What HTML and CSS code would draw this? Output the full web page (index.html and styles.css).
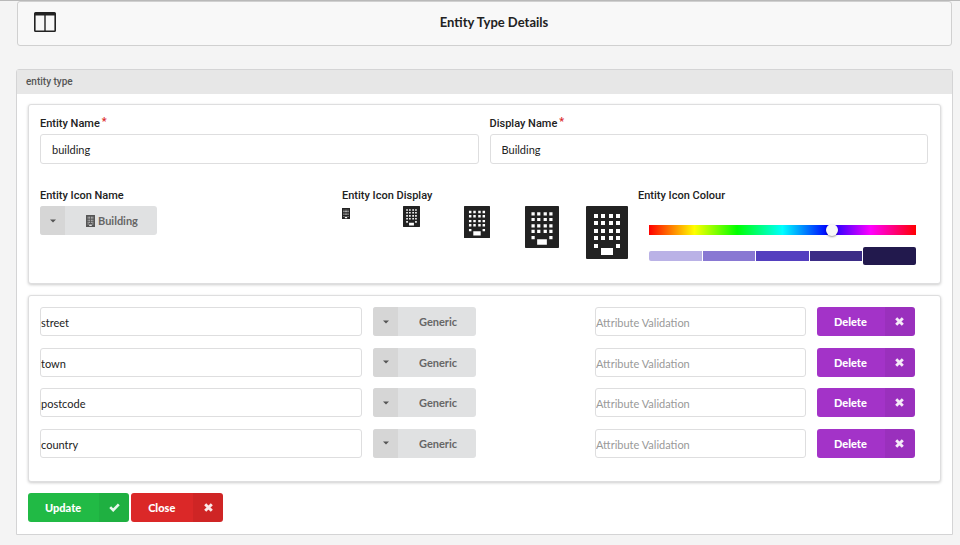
FILE: index.html
```html
<!DOCTYPE html>
<html lang="en">
<head>
<meta charset="utf-8">
<meta name="viewport" content="width=device-width, initial-scale=1">
<title>Entity Type Details</title>
<link rel="stylesheet" href="styles.css">
</head>
<body>
<svg class="sprite" aria-hidden="true">
  <symbol id="columns" viewBox="0 0 22 20">
    <path fill="currentColor" fill-rule="evenodd" d="M1.500 0h19A1.500 1.500 0 0 1 22 1.500v17A1.500 1.500 0 0 1 20.500 20h-19A1.500 1.500 0 0 1 0 18.500v-17A1.500 1.500 0 0 1 1.500 0zM1.600 3.500v15h8.700v-15zM11.700 3.500v15h8.700v-15z"/>
  </symbol>
  <symbol id="building" viewBox="0 0 42 53" preserveAspectRatio="none">
    <path fill="currentColor" fill-rule="evenodd" d="M1 0h40a1 1 0 0 1 1 1v51a1 1 0 0 1-1 1H1a1 1 0 0 1-1-1V1a1 1 0 0 1 1-1z
      M8 8v4h4V8zM15 8v4h4V8zM23 8v4h4V8zM30 8v4h4V8z
      M8 15v4h4v-4zM15 15v4h4v-4zM23 15v4h4v-4zM30 15v4h4v-4z
      M8 23v4h4v-4zM15 23v4h4v-4zM23 23v4h4v-4zM30 23v4h4v-4z
      M8 30v4h4v-4zM15 30v4h4v-4zM23 30v4h4v-4zM30 30v4h4v-4z
      M8 38v4h4v-4zM30 38v4h4v-4zM15 42v7h12v-7z"/>
  </symbol>
  <symbol id="cross" viewBox="0 0 9 9">
    <path fill="none" stroke="currentColor" stroke-width="2.900" d="M1.200 1.200l6.600 6.600M7.800 1.200L1.200 7.800"/>
  </symbol>
  <symbol id="check" viewBox="0 0 11 9">
    <path fill="none" stroke="currentColor" stroke-width="2.600" d="M1.200 4.200l3 3L9.800 1.300"/>
  </symbol>
  <symbol id="caret" viewBox="0 0 6 4">
    <path fill="currentColor" d="M0 .500h6L3 3.500z"/>
  </symbol>
</svg>

<header class="topbar">
  <svg class="topbar-icon" aria-hidden="true"><use href="#columns"/></svg>
  <h1>Entity Type Details</h1>
</header>

<main class="panel">
  <h2 class="panel-title">entity type</h2>
  <form class="panel-body">
    <section class="card details">
      <div class="names">
        <div class="field">
          <label for="entity-name">Entity Name<span class="required">*</span></label>
          <input class="text" id="entity-name" type="text" value="building">
        </div>
        <div class="field">
          <label for="display-name">Display Name<span class="required">*</span></label>
          <input class="text" id="display-name" type="text" value="Building">
        </div>
      </div>
      <div class="icons">
        <div class="field">
          <label for="icon-name">Entity Icon Name</label>
          <div class="dropdown with-icon">
            <select id="icon-name"><option>Building</option></select>
            <span class="dropdown-caret"><svg aria-hidden="true"><use href="#caret"/></svg></span>
            <svg class="dropdown-icon" aria-hidden="true"><use href="#building"/></svg>
          </div>
        </div>
        <div class="field">
          <h3>Entity Icon Display</h3>
          <div class="icon-sizes">
            <svg class="icon-mini" aria-hidden="true"><use href="#building"/></svg>
            <svg class="icon-small" aria-hidden="true"><use href="#building"/></svg>
            <svg class="icon-medium" aria-hidden="true"><use href="#building"/></svg>
            <svg class="icon-large" aria-hidden="true"><use href="#building"/></svg>
            <svg class="icon-huge" aria-hidden="true"><use href="#building"/></svg>
          </div>
        </div>
        <div class="field">
          <label for="hue">Entity Icon Colour</label>
          <div class="colour">
            <input class="hue" id="hue" type="range" min="0" max="360" value="250">
            <div class="swatches">
              <button type="button" class="shade-1" aria-label="Lightest"></button>
              <button type="button" class="shade-2" aria-label="Light"></button>
              <button type="button" class="shade-3" aria-label="Medium"></button>
              <button type="button" class="shade-4" aria-label="Dark"></button>
              <button type="button" class="shade-5 active" aria-label="Darkest"></button>
            </div>
          </div>
        </div>
      </div>
    </section>

    <section class="card attributes">
      <div class="attribute">
        <input class="text flush" type="text" value="street" aria-label="Attribute name">
        <div class="dropdown"><select aria-label="Attribute type"><option>Generic</option></select><span class="dropdown-caret"><svg aria-hidden="true"><use href="#caret"/></svg></span></div>
        <input class="text flush" type="text" placeholder="Attribute Validation" aria-label="Attribute Validation">
        <button type="button" class="button purple">Delete<span class="button-icon"><svg aria-hidden="true"><use href="#cross"/></svg></span></button>
      </div>
      <div class="attribute">
        <input class="text flush" type="text" value="town" aria-label="Attribute name">
        <div class="dropdown"><select aria-label="Attribute type"><option>Generic</option></select><span class="dropdown-caret"><svg aria-hidden="true"><use href="#caret"/></svg></span></div>
        <input class="text flush" type="text" placeholder="Attribute Validation" aria-label="Attribute Validation">
        <button type="button" class="button purple">Delete<span class="button-icon"><svg aria-hidden="true"><use href="#cross"/></svg></span></button>
      </div>
      <div class="attribute">
        <input class="text flush" type="text" value="postcode" aria-label="Attribute name">
        <div class="dropdown"><select aria-label="Attribute type"><option>Generic</option></select><span class="dropdown-caret"><svg aria-hidden="true"><use href="#caret"/></svg></span></div>
        <input class="text flush" type="text" placeholder="Attribute Validation" aria-label="Attribute Validation">
        <button type="button" class="button purple">Delete<span class="button-icon"><svg aria-hidden="true"><use href="#cross"/></svg></span></button>
      </div>
      <div class="attribute">
        <input class="text flush" type="text" value="country" aria-label="Attribute name">
        <div class="dropdown"><select aria-label="Attribute type"><option>Generic</option></select><span class="dropdown-caret"><svg aria-hidden="true"><use href="#caret"/></svg></span></div>
        <input class="text flush" type="text" placeholder="Attribute Validation" aria-label="Attribute Validation">
        <button type="button" class="button purple">Delete<span class="button-icon"><svg aria-hidden="true"><use href="#cross"/></svg></span></button>
      </div>
    </section>

    <div class="actions">
      <button type="button" class="button green">Update<span class="button-icon"><svg class="check" aria-hidden="true"><use href="#check"/></svg></span></button>
      <button type="button" class="button red">Close<span class="button-icon"><svg aria-hidden="true"><use href="#cross"/></svg></span></button>
    </div>
  </form>
</main>
</body>
</html>
```
FILE: styles.css
```css
* { box-sizing: border-box; }

body {
  margin: 0;
  padding: 0 7px 11px 16px;
  border-top: 1px solid #b9b9b9;
  background: #f4f4f4;
  color: #222;
  font-family: Lato, "Liberation Sans", sans-serif;
  font-size: 11px;
}

h1, h2, h3 { margin: 0; }
input, select, button { margin: 0; font-family: inherit; font-size: 11px; }
.sprite { display: none; }

.topbar {
  display: grid;
  grid-template-columns: 1fr auto 1fr;
  align-items: center;
  height: 45px;
  margin: 0 1px 23px;
  padding: 0 16px 3px;
  border: 1px solid #d0d0d0;
  border-radius: 3px;
  background: #f8f8f8;
}
.topbar h1 { padding-left: 19px; font-size: 13px; line-height: 18px; }
.topbar-icon { width: 22px; height: 20px; }

.panel {
  border: 1px solid #d4d4d5;
  border-radius: 3px 3px 0 0;
  background: #fff;
}
.panel-title {
  padding: 0 9px;
  background: #e7e7e7;
  color: #555;
  font-family: Roboto, sans-serif;
  font-size: 10px;
  font-weight: 500;
  line-height: 24px;
}
.panel-body { padding: 10px 11px 12px; }

.card {
  margin-bottom: 11px;
  padding: 11px 12px 11px 11px;
  border: 1px solid #dededf;
  border-radius: 3px;
  background: #fff;
  box-shadow: 0 1px 3px rgba(0, 0, 0, .2);
}
.details { min-height: 180px; }

.names {
  display: grid;
  grid-template-columns: 1fr 1fr;
  gap: 11px;
  margin-bottom: 24px;
}
.icons {
  display: grid;
  grid-template-columns: minmax(0, 291fr) minmax(0, 285fr) minmax(0, 290fr);
  gap: 11px;
}

.field label, .field h3 {
  display: block;
  margin-bottom: 2px;
  font-family: Roboto, sans-serif;
  font-size: 11px;
  font-weight: 500;
  line-height: 16px;
}
.required { margin-left: 2px; color: #db2828; line-height: 0; vertical-align: 2px; }

.text {
  display: block;
  width: 100%;
  min-width: 0;
  height: 30px;
  padding: 1px 11px 0;
  border: 1px solid #dededf;
  border-radius: 3px;
  background: #fff;
  color: #222;
}
.text.flush { height: 29px; padding: 2px 0 0; }
.text::placeholder { color: #999; opacity: 1; }

.dropdown { position: relative; width: 103px; height: 29px; }
.dropdown.with-icon { width: 117px; }
.dropdown select {
  appearance: none;
  width: 100%;
  height: 100%;
  padding: 0 0 0 46px;
  border: 0;
  border-radius: 3px;
  background: #e0e1e2;
  color: #666;
  font-weight: 700;
}
.dropdown.with-icon select { padding-left: 58px; }
.dropdown-caret {
  position: absolute;
  inset: 0 auto 0 0;
  display: grid;
  place-items: center;
  width: 25px;
  border-radius: 3px 0 0 3px;
  background: #d6d6d6;
  color: #555;
  pointer-events: none;
}
.dropdown-caret svg { width: 6px; height: 4px; }
.dropdown-icon {
  position: absolute;
  top: 9px;
  left: 46px;
  width: 9px;
  height: 12px;
  color: #555;
  pointer-events: none;
}

.icon-sizes {
  display: grid;
  grid-template-columns: repeat(5, 61px);
  align-items: start;
}
.icon-mini { width: 8px; height: 11px; margin-top: 2px; }
.icon-small { width: 17px; height: 21px; }
.icon-medium { width: 26px; height: 32px; }
.icon-large { width: 34px; height: 42px; }
.icon-huge { width: 42px; height: 53px; }

.colour { padding: 19px 12px 0 11px; }
.hue {
  appearance: none;
  display: block;
  width: 100%;
  height: 10px;
  background: linear-gradient(to right, #f00, #ff0 17%, #0f0 33%, #0ff 50%, #00f 67%, #f0f 83%, #f00);
}
.hue::-webkit-slider-thumb {
  appearance: none;
  width: 12px;
  height: 12px;
  border-radius: 50%;
  background: #f8f8f8;
  box-shadow: 0 1px 2px rgba(0, 0, 0, .4);
}
.swatches {
  display: grid;
  grid-template-columns: repeat(5, 1fr);
  gap: 1px;
  align-items: center;
  height: 18px;
  margin-top: 12px;
}
.swatches button { height: 10px; padding: 0; border: 0; }
.swatches button:first-child { border-radius: 2px 0 0 2px; }
.swatches button.active { height: 18px; border-radius: 2px; }
.shade-1 { background: #bab2e6; }
.shade-2 { background: #8978d3; }
.shade-3 { background: #543fbf; }
.shade-4 { background: #3b2c86; }
.shade-5 { background: #22194d; }

.attributes {
  display: grid;
  align-content: space-between;
  min-height: 187px;
  padding-bottom: 23px;
}
.attribute {
  display: grid;
  grid-template-columns: 322fr 211fr 211fr 111fr;
  gap: 11px;
}

.button {
  display: flex;
  align-items: center;
  justify-self: start;
  height: 29px;
  padding: 0;
  padding-left: 17px;
  border: 0;
  border-radius: 3px;
  color: #fff;
  font-weight: 900;
}
.button-icon {
  display: grid;
  place-items: center;
  width: 30px;
  height: 100%;
  margin-left: 18px;
  border-radius: 0 3px 3px 0;
  background: rgba(0, 0, 0, .05);
}
.button-icon svg { width: 9px; height: 9px; opacity: .9; }
.button-icon .check { width: 11px; }
.purple { background: #a333c8; }
.green { background: #21ba45; }
.red { background: #db2828; }
.actions { display: flex; gap: 2px; }
```
